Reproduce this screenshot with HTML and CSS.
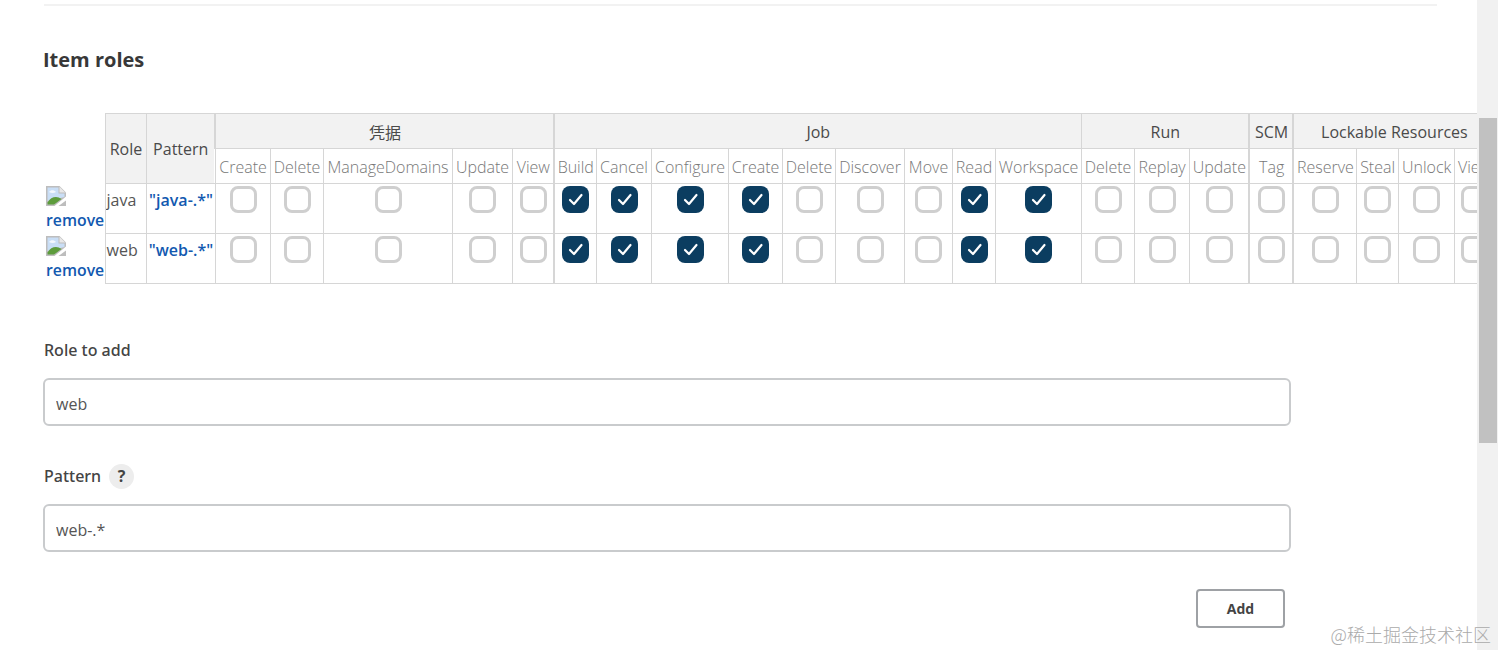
FILE: index.html
```html
<!DOCTYPE html>
<html lang="en">
<head>
<meta charset="utf-8">
<title>Item roles</title>
<link rel="stylesheet" href="styles.css">
</head>
<body>
<svg class="defs" width="0" height="0" aria-hidden="true">
  <symbol id="broken" viewBox="0 0 20 20">
    <path d="M0 0H13.5L20 6.5V20H0Z" fill="#bdbdbd"/>
    <path d="M1.5 1.5H12.5V7.5H18.5V11L1.5 15Z" fill="#c9def6"/>
    <path d="M3 6c2-2.5 5-2 7 0-2 1.2-5 1.2-7 0Z" fill="#f4f8fd"/>
    <path d="M1.5 18.5V16.5C5 10.5 11 9.5 15.5 13L8 18.5Z" fill="#5d9c3c"/>
    <path d="M13.5 .8V6.5H19.2Z" fill="#e8e8e8"/>
    <path d="M8.5 20L20 10.5V14.5L12.5 20Z" fill="#fff"/>
  </symbol>
  <symbol id="tick" viewBox="0 0 27 27">
    <path d="M8 14l4 4 7.5-9" fill="none" stroke="#fff" stroke-width="2.2" stroke-linecap="round" stroke-linejoin="round"/>
  </symbol>
</svg>
<div class="page">
  <main class="content">
    <hr class="rule">
    <h2 class="title">Item roles</h2>
    <table class="roles">
      <colgroup>
        <col class="w61"><col class="w41"><col class="w69">
        <col class="w55"><col class="w53"><col class="w129"><col class="w60"><col class="w42">
        <col class="w42"><col class="w55"><col class="w77"><col class="w54"><col class="w53"><col class="w69"><col class="w48"><col class="w43"><col class="w86">
        <col class="w53"><col class="w55"><col class="w60">
        <col class="w44">
        <col class="w63"><col class="w42"><col class="w56"><col class="w40">
      </colgroup>
      <thead>
        <tr>
          <th class="blank" rowspan="2"></th>
          <th class="main" rowspan="2">Role</th>
          <th class="main" rowspan="2">Pattern</th>
          <th class="main group" colspan="5">凭据</th>
          <th class="main group" colspan="9">Job</th>
          <th class="main" colspan="3">Run</th>
          <th class="main group" colspan="1">SCM</th>
          <th class="main group" colspan="4">Lockable Resources</th>
        </tr>
        <tr class="perms">
          <th>Create</th><th>Delete</th><th>ManageDomains</th><th>Update</th><th>View</th>
          <th class="group">Build</th><th>Cancel</th><th>Configure</th><th>Create</th><th>Delete</th><th>Discover</th><th>Move</th><th>Read</th><th>Workspace</th>
          <th>Delete</th><th>Replay</th><th>Update</th>
          <th class="group">Tag</th>
          <th class="group">Reserve</th><th>Steal</th><th>Unlock</th><th>View</th>
        </tr>
      </thead>
      <tbody>
        <tr>
          <td class="blank"><a class="remove" href="#"><svg class="broken"><use href="#broken"/></svg><span>remove</span></a></td>
          <td class="name">java</td>
          <td class="pat"><a href="#">"java-.*"</a></td>
          <td><i class="cb"></i></td><td><i class="cb"></i></td><td><i class="cb"></i></td><td><i class="cb"></i></td><td><i class="cb"></i></td>
          <td class="group"><i class="cb on"><svg><use href="#tick"/></svg></i></td><td><i class="cb on"><svg><use href="#tick"/></svg></i></td><td><i class="cb on"><svg><use href="#tick"/></svg></i></td><td><i class="cb on"><svg><use href="#tick"/></svg></i></td><td><i class="cb"></i></td><td><i class="cb"></i></td><td><i class="cb"></i></td><td><i class="cb on"><svg><use href="#tick"/></svg></i></td><td><i class="cb on"><svg><use href="#tick"/></svg></i></td>
          <td><i class="cb"></i></td><td><i class="cb"></i></td><td><i class="cb"></i></td>
          <td class="group"><i class="cb"></i></td>
          <td class="group"><i class="cb"></i></td><td><i class="cb"></i></td><td><i class="cb"></i></td><td><i class="cb"></i></td>
        </tr>
        <tr>
          <td class="blank"><a class="remove" href="#"><svg class="broken"><use href="#broken"/></svg><span>remove</span></a></td>
          <td class="name">web</td>
          <td class="pat"><a href="#">"web-.*"</a></td>
          <td><i class="cb"></i></td><td><i class="cb"></i></td><td><i class="cb"></i></td><td><i class="cb"></i></td><td><i class="cb"></i></td>
          <td class="group"><i class="cb on"><svg><use href="#tick"/></svg></i></td><td><i class="cb on"><svg><use href="#tick"/></svg></i></td><td><i class="cb on"><svg><use href="#tick"/></svg></i></td><td><i class="cb on"><svg><use href="#tick"/></svg></i></td><td><i class="cb"></i></td><td><i class="cb"></i></td><td><i class="cb"></i></td><td><i class="cb on"><svg><use href="#tick"/></svg></i></td><td><i class="cb on"><svg><use href="#tick"/></svg></i></td>
          <td><i class="cb"></i></td><td><i class="cb"></i></td><td><i class="cb"></i></td>
          <td class="group"><i class="cb"></i></td>
          <td class="group"><i class="cb"></i></td><td><i class="cb"></i></td><td><i class="cb"></i></td><td><i class="cb"></i></td>
        </tr>
      </tbody>
    </table>
    <form class="form">
      <div class="field">
        <label class="label" for="role">Role to add</label>
        <input class="input" id="role" type="text" value="web">
      </div>
      <div class="field">
        <div class="label-row">
          <label class="label" for="pattern">Pattern</label>
          <span class="help">?</span>
        </div>
        <input class="input" id="pattern" type="text" value="web-.*">
      </div>
      <div class="actions"><button class="btn" type="button">Add</button></div>
    </form>
  </main>
  <aside class="scrollbar"><div class="thumb"></div></aside>
</div>
<div class="watermark">@稀土掘金技术社区</div>
</body>
</html>
```

FILE: styles.css
```css
* { box-sizing: border-box; }
html, body { margin: 0; height: 100%; overflow: hidden; background: #fff; }
body { font-family: "Open Sans", "Noto Sans CJK SC", sans-serif; color: #333; font-size: 16px; }
.defs { position: absolute; }
.page { display: flex; height: 650px; }
.content { flex: 1; min-width: 0; overflow: hidden; padding: 4px 40px 0 43px; }
.scrollbar { width: 21px; background: #f1f1f1; padding: 118px 1px 0 2px; }
.thumb { height: 325px; background: #c1c1c1; }
.rule { margin: 0 0 0 1px; border: 0; height: 2px; background: #f2f2f2; }
.title { margin: 40px 0 0; font-size: 20px; line-height: 28px; font-weight: 700; color: #383838; }
.roles { margin: 39px 0 0 1px; border-collapse: collapse; table-layout: fixed; width: 1450px; font-size: 16px; color: #555; }
.w40 { width: 40px; } .w41 { width: 41px; } .w42 { width: 42px; } .w43 { width: 43px; } .w44 { width: 44px; }
.w48 { width: 48px; } .w53 { width: 53px; } .w54 { width: 54px; } .w55 { width: 55px; } .w56 { width: 56px; }
.w60 { width: 60px; } .w61 { width: 61px; } .w63 { width: 63px; } .w69 { width: 69px; }
.w77 { width: 77px; } .w86 { width: 86px; } .w129 { width: 129px; }
.roles th, .roles td { border: 1px solid #d6d6d6; padding: 0; white-space: nowrap; text-align: center; overflow: hidden; }
.roles th { height: 35px; font-weight: 400; padding: 1px 0 0 1px; }
.roles th.main { background: #f2f2f2; color: #4a4a4a; }
.perms th { color: #777; font-weight: 300; }
.roles td { height: 50px; vertical-align: top; padding: 2px 0 0 1px; }
.roles th.group, .roles td.group { border-left: 2px solid #d6d6d6; }
.roles th.blank, .roles td.blank { border: 0; border-right: 1px solid #d6d6d6; background: #fff; text-align: left; padding: 0; }
.remove { display: block; padding: 2px 0 0 2px; color: #1259b0; font-weight: 600; font-size: 15.8px; text-decoration: none; line-height: 22px; }
.remove span { display: block; margin-top: 3px; }
.broken { display: block; width: 20px; height: 20px; }
.name { text-align: left !important; padding-left: 1px !important; line-height: 29px; color: #555; }
.pat { line-height: 29px; }
.pat a { color: #1259b0; font-weight: 600; text-decoration: none; }
.cb { display: block; width: 27px; height: 27px; margin: 0 auto; border: 3px solid #cfcfcf; border-radius: 8px; background: #fff; }
.cb.on { border: 0; background: #0b3d60; }
.cb svg { display: block; width: 27px; height: 27px; }
.form { width: 1248px; margin-top: 53px; }
.field { margin-bottom: 37px; }
.label-row { display: flex; align-items: center; gap: 8px; height: 26px; margin-bottom: 15px; padding-left: 1px; }
.label { display: block; font-family: "Noto Sans", sans-serif; font-size: 16px; line-height: 26px; font-weight: 500; color: #444; }
.field > .label { margin-bottom: 15px; padding-left: 1px; }
.label-row .label { margin: 0; }
.help { width: 25px; height: 25px; border-radius: 50%; background: #ededed; color: #444; font-size: 16px; font-weight: 700; display: flex; align-items: center; justify-content: center; }
.input { display: block; width: 100%; height: 48px; border: 2px solid #c9cbcd; border-radius: 6px; padding: 3px 11px 0; font: inherit; font-size: 16px; color: #555; background: #fff; outline: 0; }
.actions { display: flex; justify-content: flex-end; padding-right: 6px; margin-top: 3px; }
.btn { width: 89px; height: 39px; border: 2px solid #9ea1a5; border-radius: 4px; background: #fff; font: inherit; font-size: 14px; font-weight: 700; color: #444; padding: 0; }
.watermark { position: absolute; right: 7px; top: 622px; font-size: 18px; line-height: 24px; color: #aaa; font-family: "Noto Sans CJK SC", sans-serif; font-weight: 300; white-space: nowrap; }
```
